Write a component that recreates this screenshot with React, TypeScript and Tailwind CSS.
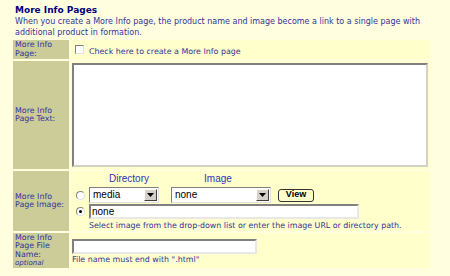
import React from "react";

const font = { fontFamily: '"DejaVu Sans", Verdana, sans-serif' };
const arial = { fontFamily: '"Liberation Sans", Arial, sans-serif' };

function SelectBox({ value, width }: { value: string; width: string }) {
  return (
    <div className={`flex h-[16px] ${width} items-center border border-t-[#808080] border-l-[#808080] border-b-[#e0e0e0] border-r-[#e0e0e0] bg-white`}>
      <div className="flex-1 pl-[3px] text-[10px] leading-none text-black" style={arial}>
        {value}
      </div>
      <div className="mr-[1px] flex h-[12px] w-[13px] items-center justify-center border border-t-white border-l-white border-b-[#404040] border-r-[#404040] bg-[#d4d0c8]">
        <svg width="7" height="4" viewBox="0 0 7 4">
          <path d="M0 0h7L3.5 4z" fill="#000" />
        </svg>
      </div>
    </div>
  );
}

export default function App() {
  return (
    <div className="h-[276px] w-[450px] overflow-hidden bg-[#ffffe0] text-[#333399]" style={font}>
      <div className="pl-[15px] pt-[4px]">
        <div className="text-[9px] font-bold leading-[12px] text-[#000080]">More Info Pages</div>
        <div className="text-[8px] leading-[11px]">
          When you create a More Info page, the product name and image become a link to a single page with additional product in formation.
        </div>
      </div>
      <div className="ml-[13px] mt-[2px] grid w-[417px] grid-cols-[56px_359px] gap-[2px]">
        {/* Row 1 */}
        <div className="h-[19px] bg-[#cccc99] pl-[2px] pt-[1px] text-[7.9px] leading-[8.5px]">
          More Info
          <br />
          Page:
        </div>
        <div className="flex h-[19px] items-center bg-[#ffffcc] pl-[4px] text-[7.9px]">
          <div className="h-[9px] w-[9px] border border-t-[#808080] border-l-[#808080] border-b-[#e0e0e0] border-r-[#e0e0e0] bg-white" />
          <span className="ml-[5px] pt-[4px]">Check here to create a More Info page</span>
        </div>
        {/* Row 2 */}
        <div className="flex h-[108px] items-center bg-[#cccc99] pl-[2px] text-[7.9px] leading-[8.5px]">
          <div>
            More Info
            <br />
            Page Text:
          </div>
        </div>
        <div className="h-[108px] bg-[#ffffcc] pl-[1px] pt-[2px]">
          <div className="h-[104px] w-[356px] border-2 border-t-[#808080] border-l-[#808080] border-b-[#d4d0c8] border-r-[#d4d0c8] bg-white" />
        </div>
        {/* Row 3 */}
        <div className="flex h-[60px] items-center bg-[#cccc99] pl-[2px] text-[7.9px] leading-[8.5px]">
          <div>
            More Info
            <br />
            Page Image:
          </div>
        </div>
        <div className="h-[60px] bg-[#ffffcc] pl-[5px] pt-[2px]">
          <div className="flex text-[10px] leading-[12px] text-[#3333bb]" style={arial}>
            <div className="w-[92px] pl-[14px] text-center">Directory</div>
            <div className="w-[100px] text-center">Image</div>
          </div>
          <div className="mt-[2px] flex items-center">
            <div className="h-[9px] w-[9px] rounded-full border border-t-[#808080] border-l-[#808080] border-b-[#e0e0e0] border-r-[#e0e0e0] bg-white" />
            <div className="ml-[4px]">
              <SelectBox value="media" width="w-[70px]" />
            </div>
            <div className="ml-[12px]">
              <SelectBox value="none" width="w-[100px]" />
            </div>
            <div
              className="ml-[7px] flex h-[13px] w-[36px] items-center justify-center rounded-[3px] border border-[#333] bg-[#ffffcc] text-[9px] font-bold text-black"
              style={arial}
            >
              View
            </div>
          </div>
          <div className="mt-[1px] flex items-center">
            <div className="flex h-[9px] w-[9px] items-center justify-center rounded-full border border-t-[#808080] border-l-[#808080] border-b-[#e0e0e0] border-r-[#e0e0e0] bg-white">
              <div className="h-[3px] w-[3px] rounded-full bg-black" />
            </div>
            <div
              className="ml-[4px] flex h-[15px] w-[270px] items-center border-2 border-t-[#808080] border-l-[#808080] border-b-[#e8e8e8] border-r-[#e8e8e8] bg-white pl-[1px] text-[10px] text-black"
              style={arial}
            >
              none
            </div>
          </div>
          <div className="mt-[2px] pl-[13px] text-[7.9px] leading-[9px]">
            Select image from the drop-down list or enter the image URL or directory path.
          </div>
        </div>
        {/* Row 4 */}
        <div className="h-[35px] bg-[#cccc99] pl-[2px] pt-[1px] text-[7.9px] leading-[8.3px]">
          More Info
          <br />
          Page File
          <br />
          Name:
          <br />
          <i className="text-[7px]">optional</i>
        </div>
        <div className="h-[35px] bg-[#ffffcc] pl-[1px] pt-[6px]">
          <div className="h-[15px] w-[185px] border-2 border-t-[#808080] border-l-[#808080] border-b-[#e8e8e8] border-r-[#e8e8e8] bg-white" />
          <div className="mt-[1px] text-[7.9px] leading-[9px]">File name must end with ".html"</div>
        </div>
      </div>
    </div>
  );
}
